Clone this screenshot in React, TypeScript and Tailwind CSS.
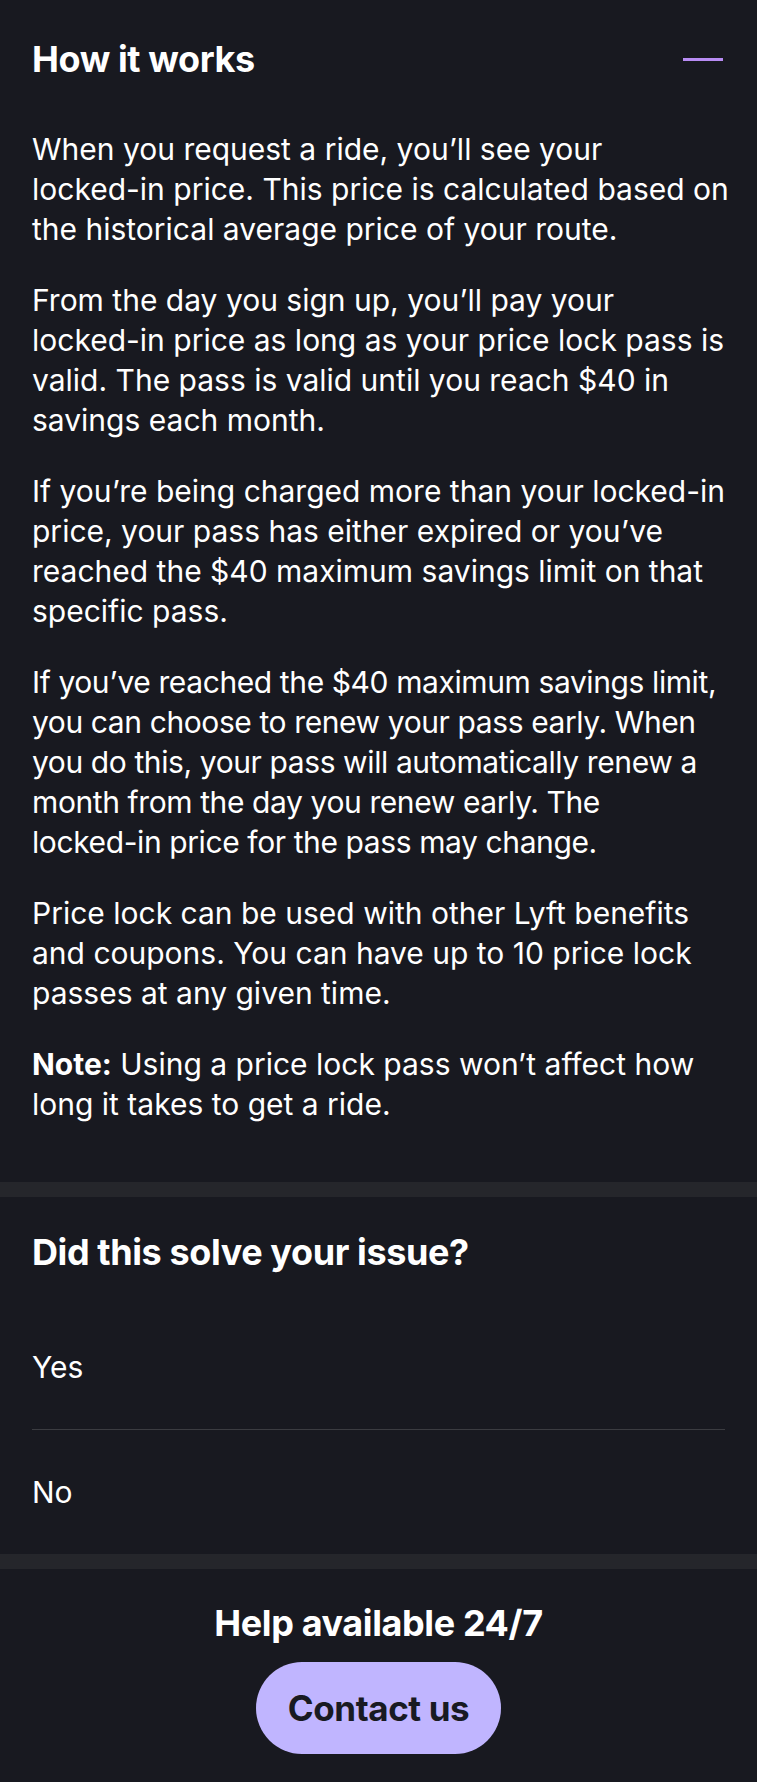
function LockedIn() {
  return <span className="whitespace-nowrap">locked-in</span>;
}

export default function App() {
  return (
    <main className="min-h-screen w-[757px] bg-[#181920] text-white font-['Inter','Liberation_Sans',sans-serif]">
      <section className="pl-8 pr-6 pt-[39px] pb-[58px]">
        <div className="flex items-center justify-between">
          <h2 className="text-[36px] leading-[40px] font-bold tracking-[-0.4px]">How it works</h2>
          <span className="mr-[10px] block h-[3px] w-[40px] bg-[#b88cf4]" />
        </div>
        <div className="mt-[50px] flex flex-col gap-[31px] text-[30px] leading-[40px]">
          <p>
            When you request a ride, you’ll see your <LockedIn /> price. This price is calculated based on the
            historical average price of your route.
          </p>
          <p>
            From the day you sign up, you’ll pay your <LockedIn /> price as long as your price lock pass is valid. The
            pass is valid until you reach $40 in savings each month.
          </p>
          <p>
            If you’re being charged more than your <LockedIn /> price, your pass has either expired or you’ve reached
            the $40 maximum savings limit on that specific pass.
          </p>
          <p className="tracking-[-0.4px]">
            If you’ve reached the $40 maximum savings limit, you can choose to renew your pass early. When you do this,
            your pass will automatically renew a month from the day you renew early. The <LockedIn /> price for the
            pass may change.
          </p>
          <p>
            Price lock can be used with other Lyft benefits and coupons. You can have up to 10 price lock passes at any
            given time.
          </p>
          <p>
            <span className="font-bold">Note:</span> Using a price lock pass won’t affect how long it takes to get a ride.
          </p>
        </div>
      </section>

      <div className="h-[15px] bg-[#25262b]" />

      <section className="px-8 pt-[35px]">
        <h2 className="text-[36px] leading-[40px] font-bold tracking-[-0.4px]">Did this solve your issue?</h2>
        <ul className="mt-[34px]">
          <li className="flex h-[124px] items-center border-b border-[#3b3c41] text-[30px]">Yes</li>
          <li className="flex h-[124px] items-center text-[30px]">No</li>
        </ul>
      </section>

      <div className="h-[15px] bg-[#25262b]" />

      <section className="flex flex-col items-center pt-[34px] pb-[26px]">
        <h2 className="text-[36px] leading-[40px] font-bold tracking-[-0.4px]">Help available 24/7</h2>
        <button className="mt-[19px] h-[92px] w-[245px] rounded-full bg-[#c0b5ff] text-[35px] font-bold tracking-[-0.4px] text-[#191a22]">
          Contact us
        </button>
      </section>
    </main>
  );
}
